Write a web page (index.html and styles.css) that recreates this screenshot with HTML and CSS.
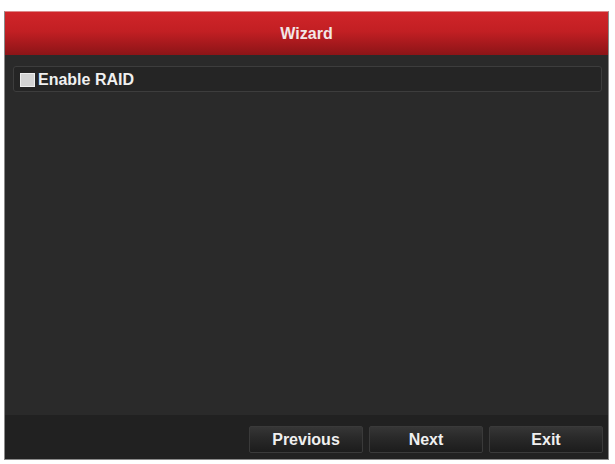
FILE: index.html
```html
<!DOCTYPE html>
<html>
<head>
<meta charset="utf-8">
<link rel="stylesheet" href="styles.css">
</head>
<body>
<div class="panel">
  <div class="header">Wizard</div>
  <div class="content">
    <div class="row">
      <span class="checkbox"></span>
      <span class="label">Enable RAID</span>
    </div>
  </div>
  <div class="footer">
    <button class="btn">Previous</button>
    <button class="btn">Next</button>
    <button class="btn">Exit</button>
  </div>
</div>
</body>
</html>
```
FILE: styles.css
```css
html, body {
  margin: 0;
  padding: 0;
  background: #ffffff;
}
body {
  width: 615px;
  height: 464px;
  overflow: hidden;
  font-family: "Liberation Sans", Arial, sans-serif;
}
.panel {
  margin: 11px 0 0 4px;
  width: 603px;
  height: 447px;
  border: 1px solid #8a8a8a;
  border-top-color: #d88;
  background: #2a2a2a;
  display: flex;
  flex-direction: column;
}
.header {
  height: 43px;
  flex: none;
  background: linear-gradient(to bottom, #d02529 0%, #c21f23 45%, #8c1417 100%);
  color: #f2e6e6;
  font-weight: bold;
  font-size: 16px;
  display: flex;
  align-items: center;
  justify-content: center;
}
.content {
  flex: 1;
  padding: 11px 6px 0 8px;
  background: #2a2a2a;
}
.row {
  height: 24px;
  border: 1px solid #3d3d3d;
  border-radius: 3px;
  background: #252525;
  display: flex;
  align-items: center;
  padding-left: 6px;
  gap: 3px;
}
.checkbox {
  width: 15px;
  height: 14px;
  margin-top: 1px;
  background: #d4d4d4;
  border: 1px solid #eee;
  box-sizing: border-box;
}
.label {
  color: #f0f0f0;
  font-weight: bold;
  font-size: 16px;
  padding-top: 1px;
}
.footer {
  height: 44px;
  flex: none;
  background: #212121;
  display: flex;
  justify-content: flex-end;
  align-items: flex-start;
  padding: 11px 5px 0 0;
  box-sizing: border-box;
  gap: 6px;
}
.btn {
  width: 114px;
  height: 27px;
  border: 1px solid #3a3a3a;
  border-radius: 2px;
  background: linear-gradient(to bottom, #363636 0%, #2a2a2a 40%, #1c1c1c 100%);
  color: #f0f0f0;
  font-family: "Liberation Sans", Arial, sans-serif;
  font-weight: bold;
  font-size: 16px;
  padding: 0;
}
```
